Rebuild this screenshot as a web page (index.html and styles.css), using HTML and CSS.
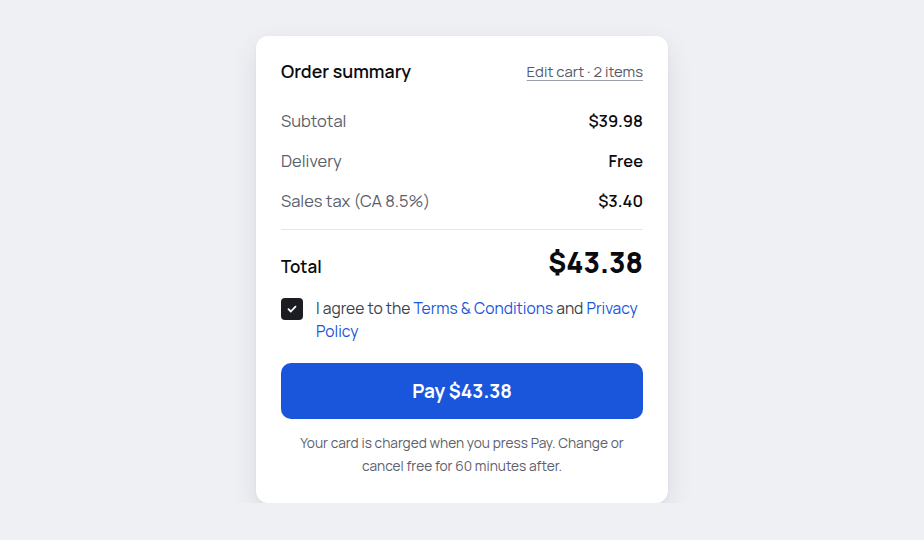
FILE: index.html
```html
<!DOCTYPE html>
<html lang="en">

<head>
    <meta charset="UTF-8">
    <meta name="viewport" content="width=device-width, initial-scale=1.0">
    <title>Order summary</title>
    <link rel="stylesheet" href="styles.css">
</head>

<body>
    <div class="summary">
        <div class="head">
            <h2>Order summary</h2>
            <a href="#" class="edit">Edit cart · 2 items</a>
        </div>
        <ul class="lines">
            <li><span>Subtotal</span><b>$39.98</b></li>
            <li><span>Delivery</span><b>Free</b></li>
            <li><span>Sales tax (CA 8.5%)</span><b>$3.40</b></li>
        </ul>
        <div class="total">
            <span>Total</span>
            <strong>$43.38</strong>
        </div>
        <label class="agree">
            <span class="box">
                <svg width="12" height="12" viewBox="0 0 12 12"><path d="M2.5 6.2l2.3 2.3 4.7-4.9" fill="none" stroke="#fff" stroke-width="1.8" stroke-linecap="round" stroke-linejoin="round"/></svg>
            </span>
            <span>I agree to the <a href="#">Terms &amp; Conditions</a> and <a href="#">Privacy Policy</a></span>
        </label>
        <button class="pay">Pay $43.38</button>
        <p class="note">Your card is charged when you press Pay. Change or cancel free for 60 minutes after.</p>
    </div>
</body>

</html>
```

FILE: styles.css
```css
html,
body,
div,
ul,
li,
h2,
p {
    margin: 0;
    padding: 0;
}

ul {
    list-style: none;
}

a {
    text-decoration: none;
}

body {
    background: #eff0f4;
    font-family: Manrope, Inter, "Noto Sans", sans-serif;
    color: #0b0b0f;
    padding-top: 36px;
}

.summary {
    width: 362px;
    margin: 0 auto;
    background: #fff;
    border-radius: 12px;
    padding: 23px 25px 26px;
    box-shadow: 0 10px 28px rgba(20, 24, 40, 0.09), 0 1px 3px rgba(20, 24, 40, 0.05);
}

.head {
    display: flex;
    justify-content: space-between;
    align-items: center;
    height: 24px;
}

.head h2 {
    font-size: 17.8px;
    font-weight: 600;
}

.edit {
    font-size: 14.9px;
    color: #555a66;
    text-decoration: underline;
    text-underline-offset: 3px;
    text-decoration-color: #9a9ea8;
}

.lines {
    padding-top: 17px;
    border-bottom: 1px solid #e6e7eb;
    padding-bottom: 9px;
}

.lines li {
    display: flex;
    justify-content: space-between;
    align-items: center;
    height: 40px;
    font-size: 16.5px;
}

.lines li span {
    color: #5a5f6c;
}

.lines li b {
    font-weight: 600;
}

.total {
    display: flex;
    justify-content: space-between;
    align-items: flex-end;
    margin-top: 14px;
    height: 36px;
}

.total span {
    font-size: 17px;
    font-weight: 600;
    padding-bottom: 2px;
}

.total strong {
    font-size: 28px;
    font-weight: 800;
    line-height: 36px;
}

.agree {
    display: flex;
    gap: 13px;
    margin-top: 17px;
    font-size: 15.6px;
    line-height: 23px;
    color: #3c4049;
}

.agree a {
    color: #1a56db;
}

.box {
    flex: none;
    width: 22px;
    height: 22px;
    margin-top: 1px;
    border-radius: 4px;
    background: #1c1d22;
    display: flex;
    align-items: center;
    justify-content: center;
}

.pay {
    display: block;
    width: 100%;
    height: 56px;
    margin-top: 20px;
    border: 0;
    border-radius: 10px;
    background: #1a56db;
    color: #fff;
    font-family: inherit;
    font-size: 19px;
    font-weight: 700;
}

.note {
    margin-top: 12px;
    text-align: center;
    font-size: 13.7px;
    line-height: 23px;
    color: #5c606b;
    padding: 0 10px;
}
```
